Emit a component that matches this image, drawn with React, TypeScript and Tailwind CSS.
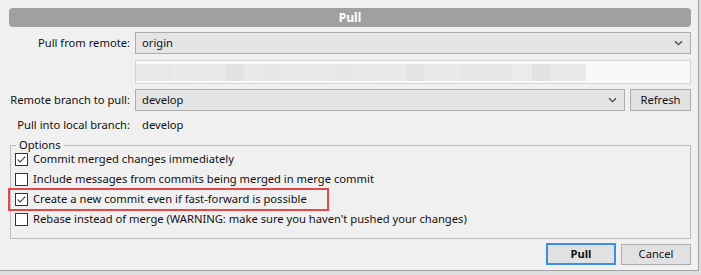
import type { ReactNode } from 'react'

const font = { fontFamily: '"Segoe UI", "Noto Sans", "Liberation Sans", sans-serif' }

function Chevron() {
  return (
    <svg width="9" height="6" viewBox="0 0 9 6" className="shrink-0">
      <path d="M1 1.2 L4.5 4.6 L8 1.2" fill="none" stroke="#404040" strokeWidth="1.2" />
    </svg>
  )
}

function Select({ value, className = '' }: { value: string; className?: string }) {
  return (
    <div className={`h-[22px] flex items-center justify-between pl-[6px] pr-[7px] bg-[#e5e5e5] border border-[#adadad] ${className}`}>
      <span>{value}</span>
      <Chevron />
    </div>
  )
}

function Label({ children }: { children: ReactNode }) {
  return <div className="w-[126px] shrink-0 pr-[5px] text-right whitespace-nowrap">{children}</div>
}

function Checkbox({ checked, label }: { checked: boolean; label: string }) {
  return (
    <div className="h-[20px] flex items-center">
      <div className="w-[13px] h-[13px] ml-[4px] mr-[5px] border border-[#333333] bg-white flex items-center justify-center shrink-0">
        {checked && (
          <svg width="11" height="11" viewBox="0 0 11 11">
            <path d="M1.8 5.6 L4.2 8 L9.2 2.6" fill="none" stroke="#333333" strokeWidth="1.1" />
          </svg>
        )}
      </div>
      <span className="whitespace-nowrap">{label}</span>
    </div>
  )
}

// pixelated url in the remote field
const blur = [
  { w: 36, c: '#e8e8e8' }, { w: 18, c: '#eaeaea' }, { w: 18, c: '#e8e8e8' }, { w: 18, c: '#e9e9e9' },
  { w: 18, c: '#e2e2e2' }, { w: 18, c: '#e9e9e9' }, { w: 18, c: '#e7e7e7' }, { w: 54, c: '#e9e9e9' },
  { w: 18, c: '#e7e7e7' }, { w: 18, c: '#e8e8e8' }, { w: 18, c: '#e9e9e9' }, { w: 18, c: '#eaeaea' },
  { w: 18, c: '#e3e3e3' }, { w: 36, c: '#e9e9e9' }, { w: 53, c: '#e7e7e7' }, { w: 19, c: '#ebebeb' },
  { w: 18, c: '#e2e2e2' }, { w: 36, c: '#e9e9e9' },
]

export default function App() {
  return (
    <div className="w-[701px] h-[275px] bg-[#dedede] overflow-hidden text-[11.2px] text-[#111111]" style={font}>
      <div className="relative w-[699px] h-[271px] bg-[#f0f0f0] border-r border-b border-[#a3a3a3] pt-[8px] pl-[9px]">
        <div className="w-[682px] h-[19px] rounded-[4px] bg-[#a0a0a0] flex items-center justify-center text-white text-[12px] font-bold leading-none">
          Pull
        </div>

        <div className="w-[682px]">
          <div className="mt-[5px] flex items-center">
            <Label>Pull from remote:</Label>
            <Select value="origin" className="flex-1" />
          </div>

          <div className="mt-[6px] flex">
            <div className="w-[126px] shrink-0" />
            <div className="flex-1 h-[24px] border border-[#d4d4d4] bg-[#f9f9f9] pt-[3px]">
              <div className="flex h-[17px]">
                {blur.map((b, i) => (
                  <div key={i} className="h-full" style={{ width: b.w, backgroundColor: b.c }} />
                ))}
              </div>
            </div>
          </div>

          <div className="mt-[5px] flex items-center">
            <Label>Remote branch to pull:</Label>
            <Select value="develop" className="flex-1" />
            <button className="ml-[5px] w-[61px] h-[22px] bg-[#e1e1e1] border border-[#adadad]">Refresh</button>
          </div>

          <div className="mt-[3px] h-[22px] flex items-center">
            <Label>Pull into local branch:</Label>
            <span className="pl-[7px]">develop</span>
          </div>

          <fieldset className="mt-[5px] ml-[1px] border border-[#bdbdbd] pb-[9px]">
            <legend className="ml-[5px] px-[3px] leading-[8px]">Options</legend>
            <Checkbox checked label="Commit merged changes immediately" />
            <Checkbox checked={false} label="Include messages from commits being merged in merge commit" />
            <Checkbox checked label="Create a new commit even if fast-forward is possible" />
            <Checkbox checked={false} label="Rebase instead of merge (WARNING: make sure you haven't pushed your changes)" />
          </fieldset>

          <div className="mt-[4px] flex justify-end gap-[5px]">
            <button className="w-[70px] h-[22px] bg-[#e1e1e1] border-2 border-[#3c8fe6] font-bold">Pull</button>
            <button className="w-[70px] h-[21px] mt-[1px] bg-[#e1e1e1] border border-[#adadad]">Cancel</button>
          </div>
        </div>

        {/* annotation box */}
        <div className="absolute left-[8px] top-[188px] w-[321px] h-[23px] border-2 border-[#e5484a]" />
      </div>
    </div>
  )
}
